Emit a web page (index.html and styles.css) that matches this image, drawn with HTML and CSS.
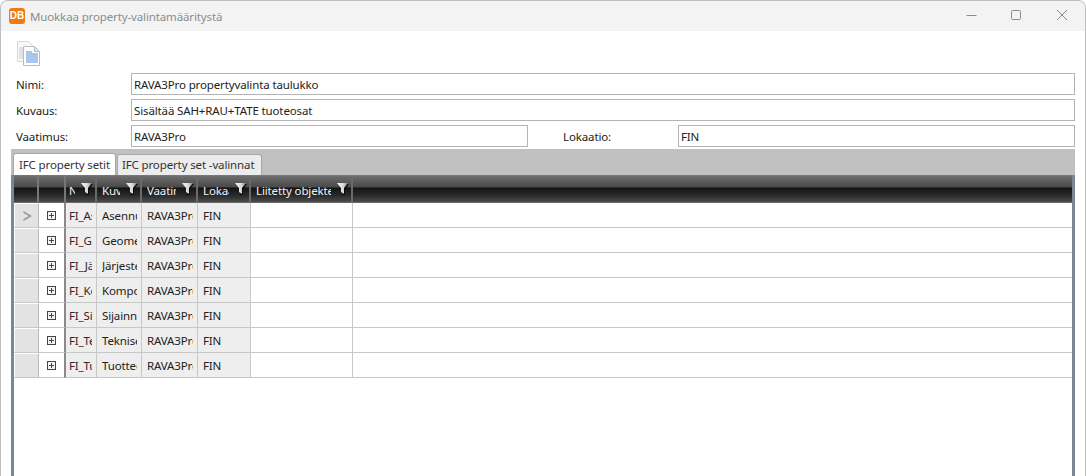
FILE: index.html
```html
<!DOCTYPE html>
<html lang="fi">
<head>
<meta charset="utf-8">
<title>Muokkaa property-valintamääritystä</title>
<link rel="stylesheet" href="styles.css">
</head>
<body>
<svg width="0" height="0" class="defs">
  <defs>
    <linearGradient id="fg" x1="0" y1="0" x2="1" y2="0"><stop offset="0" stop-color="#fafafa"/><stop offset=".6" stop-color="#d4d4d4"/><stop offset="1" stop-color="#777"/></linearGradient>
    <symbol id="funnel" viewBox="0 0 12 13">
      <path d="M1.500 2h10.500l-4 5.500v5.500h-3V7z" fill="#000" opacity=".75"/>
      <path d="M0 1h11l-4 5v6l-3-2V6z" fill="url(#fg)"/>
    </symbol>
  </defs>
</svg>
<div class="window">
  <header class="titlebar">
    <div class="app-icon">DB</div>
    <div class="title">Muokkaa property-valintamääritystä</div>
    <div class="controls">
      <svg width="46" height="30" viewBox="0 0 46 30"><path d="M19.500 14.500h10" stroke="#8a8a8a" fill="none"/></svg>
      <svg width="46" height="30" viewBox="0 0 46 30"><rect x="18.500" y="9.500" width="9" height="9" rx="1" stroke="#8a8a8a" fill="none"/></svg>
      <svg width="46" height="30" viewBox="0 0 46 30"><path d="M18 9l10 10M28 9l-10 10" stroke="#8a8a8a" fill="none"/></svg>
    </div>
  </header>
  <div class="toolbar">
    <svg class="doc-icon" width="26" height="26" viewBox="0 0 26 26">
      <path d="M1.500 1.500h11l4 4v16h-15z" fill="#f8f8f8" stroke="#d4d7dc"/>
      <path d="M3 8h4M3 10h4M3 12h4M3 14h4M3 16h4M3 18h4" stroke="#c6cacf"/>
      <path d="M7.500 6.500h11l5 5v14h-16z" fill="#fff" stroke="#b4bcc8"/>
      <path d="M18.500 6.500v5h5z" fill="#dfe6ee" stroke="#b4bcc8"/>
      <path d="M10 12h6M10 14h12M10 16h12M10 18h12M10 20h12M10 22h12" stroke="#4f8fd6"/>
    </svg>
  </div>
  <form class="fields">
    <label class="lab">Nimi:</label>
    <div class="input wide">RAVA3Pro propertyvalinta taulukko</div>
    <label class="lab">Kuvaus:</label>
    <div class="input wide">Sisältää SAH+RAU+TATE tuoteosat</div>
    <label class="lab">Vaatimus:</label>
    <div class="input">RAVA3Pro</div>
    <label class="lab lab2">Lokaatio:</label>
    <div class="input">FIN</div>
  </form>
  <section class="tabpanel">
    <div class="tabs">
      <div class="tab active">IFC property setit</div>
      <div class="tab">IFC property set -valinnat</div>
    </div>
    <div class="grid">
      <div class="row head">
        <div class="hcell stub"></div>
        <div class="hcell stub"></div>
        <div class="hcell dark name"><span class="clip">Nimi</span><svg class="fi"><use href="#funnel"/></svg></div>
        <div class="hcell dark"><span class="clip">Kuvaus</span><svg class="fi"><use href="#funnel"/></svg></div>
        <div class="hcell dark"><span class="clip">Vaatimus</span><svg class="fi"><use href="#funnel"/></svg></div>
        <div class="hcell dark"><span class="clip">Lokaatio</span><svg class="fi"><use href="#funnel"/></svg></div>
        <div class="hcell dark"><span class="clip">Liitetty objektejä</span><svg class="fi"><use href="#funnel"/></svg></div>
        <div class="hcell dark last"></div>
      </div>
      <div class="row"><div class="ind"><svg width="10" height="10" viewBox="0 0 10 10"><path d="M1.500 1l7 4-7 4" fill="none" stroke="#999" stroke-width="1.600"/></svg></div><div class="exp"><span class="plus"></span></div><div class="cell first"><span class="clip">FI_Asennus</span></div><div class="cell"><span class="clip">Asennustiedot</span></div><div class="cell"><span class="clip">RAVA3Pro</span></div><div class="cell"><span class="clip">FIN</span></div><div class="cell blank"></div><div class="rest"></div></div>
      <div class="row"><div class="ind"></div><div class="exp"><span class="plus"></span></div><div class="cell first"><span class="clip">FI_Geometria</span></div><div class="cell"><span class="clip">Geometria</span></div><div class="cell"><span class="clip">RAVA3Pro</span></div><div class="cell"><span class="clip">FIN</span></div><div class="cell blank"></div><div class="rest"></div></div>
      <div class="row"><div class="ind"></div><div class="exp"><span class="plus"></span></div><div class="cell first"><span class="clip">FI_Järjestelmä</span></div><div class="cell"><span class="clip">Järjestelmä</span></div><div class="cell"><span class="clip">RAVA3Pro</span></div><div class="cell"><span class="clip">FIN</span></div><div class="cell blank"></div><div class="rest"></div></div>
      <div class="row"><div class="ind"></div><div class="exp"><span class="plus"></span></div><div class="cell first"><span class="clip">FI_Komponentti</span></div><div class="cell"><span class="clip">Komponentti</span></div><div class="cell"><span class="clip">RAVA3Pro</span></div><div class="cell"><span class="clip">FIN</span></div><div class="cell blank"></div><div class="rest"></div></div>
      <div class="row"><div class="ind"></div><div class="exp"><span class="plus"></span></div><div class="cell first"><span class="clip">FI_Sijainti</span></div><div class="cell"><span class="clip">Sijainnit</span></div><div class="cell"><span class="clip">RAVA3Pro</span></div><div class="cell"><span class="clip">FIN</span></div><div class="cell blank"></div><div class="rest"></div></div>
      <div class="row"><div class="ind"></div><div class="exp"><span class="plus"></span></div><div class="cell first"><span class="clip">FI_Tekninen</span></div><div class="cell"><span class="clip">Tekniset</span></div><div class="cell"><span class="clip">RAVA3Pro</span></div><div class="cell"><span class="clip">FIN</span></div><div class="cell blank"></div><div class="rest"></div></div>
      <div class="row"><div class="ind"></div><div class="exp"><span class="plus"></span></div><div class="cell first"><span class="clip">FI_Tuote</span></div><div class="cell"><span class="clip">Tuotteet</span></div><div class="cell"><span class="clip">RAVA3Pro</span></div><div class="cell"><span class="clip">FIN</span></div><div class="cell blank"></div><div class="rest"></div></div>
    </div>
  </section>
</div>
</body>
</html>
```
FILE: styles.css
```css
* { box-sizing: border-box; }
html, body { margin: 0; height: 100%; overflow: hidden; background: #fff; }
body { font-family: "Noto Sans", "Open Sans", sans-serif; font-size: 11.5px; letter-spacing: -0.13px; color: #222; }
.defs { position: absolute; }
.window { height: 476px; display: flex; flex-direction: column; border: 1px solid #bdbdbd; border-bottom: 0; border-radius: 8px 8px 0 0; overflow: hidden; }
.titlebar { height: 30px; flex: none; display: flex; align-items: center; background: #f3f3f3; padding-left: 8px; }
.app-icon { width: 16px; height: 16px; border-radius: 3px; background: #ee7b0f; color: #fff; font-size: 10px; font-weight: 700; line-height: 16px; letter-spacing: 0; text-align: center; font-family: "Liberation Sans", sans-serif; }
.title { margin-left: 5px; color: #8c8c8c; }
.controls { margin-left: auto; display: flex; }
.toolbar { height: 36px; flex: none; padding: 9px 0 0 15px; }
.doc-icon { display: block; }
.fields { flex: none; display: grid; grid-template-columns: 115px 397px 35px 115px 397px; grid-auto-rows: 22px; row-gap: 4px; padding: 6px 10px 0 15px; }
.lab { line-height: 24px; }
.input { border: 1px solid #b4b4b4; line-height: 22px; padding-left: 2px; color: #222; white-space: nowrap; overflow: hidden; }
.wide { grid-column: 2 / -1; }
.lab2 { grid-column: 4; }
.tabpanel { flex: 1; margin: 2px 10px 0 10px; background: #c0c0c0; display: flex; flex-direction: column; min-height: 0; }
.tabs { display: flex; height: 26px; flex: none; padding: 5px 0 0 2px; gap: 1px; }
.tab { height: 21px; padding: 0 5px; line-height: 20px; background: #ececec; border: 1px solid #a8a8a8; border-bottom: 0; border-radius: 3px 3px 0 0; color: #333; }
.tab + .tab { padding: 0 7px 0 4px; }
.tab.active { background: #fff; height: 22px; margin-top: -1px; line-height: 22px; }
.grid { flex: 1; background: #fff; border-left: 3px solid #7b8794; border-right: 3px solid #7b8794; min-height: 0; }
.row { display: grid; grid-template-columns: 25px 27px 31px 45px 56px 53px 102px 1fr; height: 25px; }
.row.head { height: 28px; border-top: 1px solid #777; }
.hcell { height: 27px; border: 1px solid #6a6a6a; border-width: 0 2px 1px 0; background: linear-gradient(#6e6e6e 0, #4a4a4a 42%, #141414 46%, #2a2a2a 75%, #4c4c4c 100%); color: #f2f2f2; display: flex; align-items: center; padding: 2px 2px 0 5px; }
.hcell.name { padding-left: 3px; }
.hcell.stub { border-right: 2px solid #777; }
.clip { display: block; overflow: hidden; white-space: nowrap; }
.hcell .clip { flex: 1; min-width: 0; }
.hcell.last { border-right-width: 0; }
.fi { width: 12px; height: 13px; flex: none; margin-left: 6px; margin-top: -3px; }
.ind { background: #e3e3e3; border: 1px solid #fff; border-right: 1px solid #bbb; border-bottom: 1px solid #c8c8c8; display: flex; align-items: center; justify-content: center; padding-top: 1px; }
.exp { border-bottom: 1px solid #c8c8c8; border-right: 2px solid #8a8a8a; display: flex; align-items: center; justify-content: center; padding-top: 1px; }
.plus { width: 9px; height: 9px; border: 1px solid #444; background: linear-gradient(#444, #444) center / 5px 1px no-repeat, linear-gradient(#444, #444) center / 1px 5px no-repeat, #f4f4f4; }
.cell { background: #eeeeee; border-right: 1px solid #c8c8c8; border-bottom: 1px solid #c8c8c8; line-height: 26px; padding: 0 4px 0 5px; overflow: hidden; color: #222; }
.cell.first { color: #3a2424; padding-left: 3px; }
.cell.blank { background: #fff; }
.rest { border-bottom: 1px solid #c8c8c8; }
```
